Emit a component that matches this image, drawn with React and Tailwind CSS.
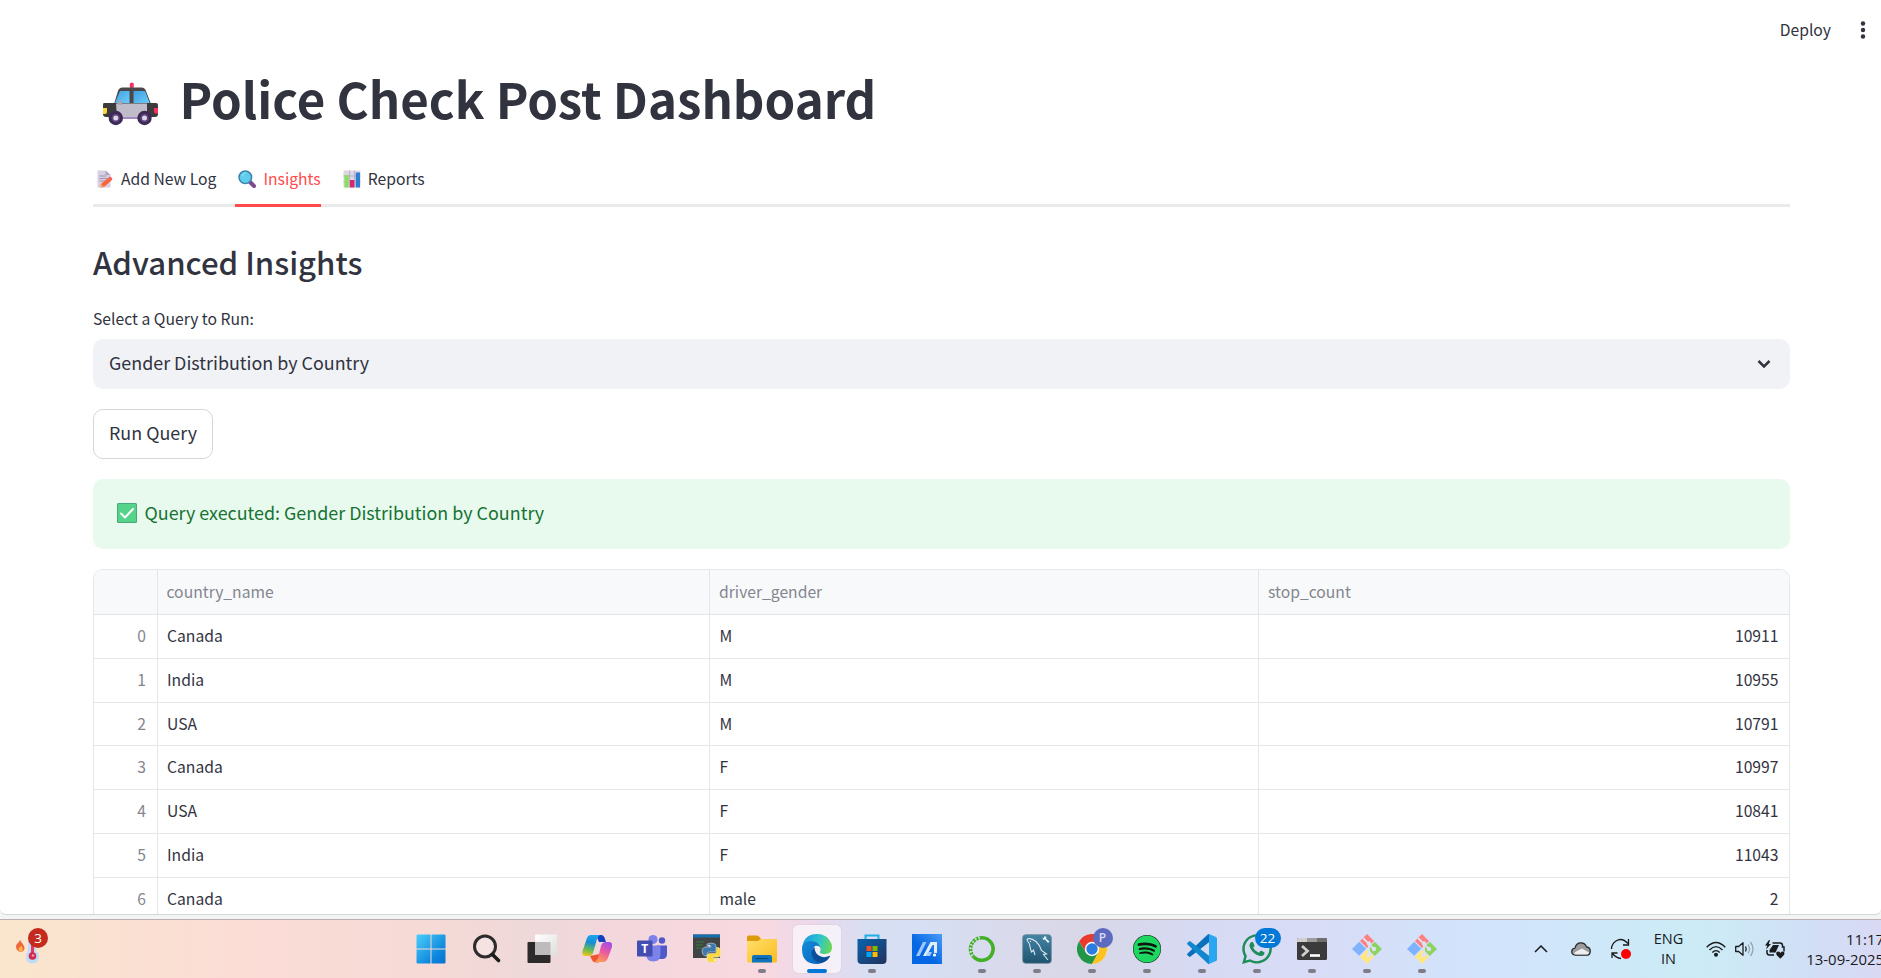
import React from "react";
import { FaSpotify, FaWhatsapp } from "react-icons/fa";

const rows = [
  ["Canada", "M", "10911"],
  ["India", "M", "10955"],
  ["USA", "M", "10791"],
  ["Canada", "F", "10997"],
  ["USA", "F", "10841"],
  ["India", "F", "11043"],
  ["Canada", "male", "2"],
];

function PoliceCar() {
  return (
    <svg className="h-[44px] w-[56px]" viewBox="0 0 56 44">
      <defs>
        <linearGradient id="glass" x1="0" y1="0" x2="1" y2="1">
          <stop offset="0" stopColor="#3f9fe0" />
          <stop offset="1" stopColor="#6ccffc" />
        </linearGradient>
      </defs>
      <rect x="27.800" y="0.500" width="4" height="6" rx="2" fill="#f92f60" />
      <path d="M16 9q1-3.500 4.500-3.500h19q3.500 0 4.500 3.500l5 13H12z" fill="#4a4649" />
      <path d="M18 9h9.500v13H12.500z" fill="url(#glass)" />
      <path d="M31.500 9H42q1 0 1.500 1l4.500 12H31.500z" fill="url(#glass)" />
      <path d="M2 21h52q2 0 2 2v9q0 3-3 3H4q-3 0-3-3V23q0-2 1-2z" fill="#3c3a3d" />
      <path d="M14 21.500h31v14H15z" fill="#c1bcca" />
      <path d="M18 35h22v2H18z" fill="#a48bbf" />
      <path d="M1 26h4v4q0 2-2 2H1z" fill="#fcd53f" />
      <path d="M52 26H56v5.500h-2q-2 0-2-2z" fill="#f92f60" />
      <path d="M15.500 22.500q0-4.500 4.500-4.500v5z" fill="#aaa5b2" />
      <circle cx="13.800" cy="36" r="7.200" fill="#3d2857" />
      <circle cx="13.800" cy="36" r="4.300" fill="#5b4577" />
      <circle cx="13.800" cy="36" r="2.500" fill="#ddd5e6" />
      <circle cx="42.500" cy="36" r="7.200" fill="#3d2857" />
      <circle cx="42.500" cy="36" r="4.300" fill="#5b4577" />
      <circle cx="42.500" cy="36" r="2.500" fill="#ddd5e6" />
    </svg>
  );
}

function MemoIcon() {
  return (
    <svg className="h-[18px] w-[18px]" viewBox="0 0 18 18">
      <path d="M1.500 0.500h8L14.500 5v12.500h-13z" fill="#d8d0e2" />
      <path d="M9.500 0.500L14.500 5h-5z" fill="#b0a4c0" />
      <path d="M3.500 6h7M3.500 8.500h8M3.500 11h6" stroke="#a094ae" strokeWidth="1" />
      <path d="M5 14l7.500-6.500 3 3L8 17l-3.500.5z" fill="#f9663a" />
      <path d="M12.500 7.500l1.500-1q1 0 2.500 2.500l-1 1.500z" fill="#f0565c" />
      <path d="M5 14l3 3-3.500.5z" fill="#f3ad61" />
    </svg>
  );
}

function LensIcon() {
  return (
    <svg className="h-[18px] w-[18px]" viewBox="0 0 18 18">
      <path d="M11 11l5 5" stroke="#7d4b8d" strokeWidth="4" strokeLinecap="round" />
      <circle cx="7.300" cy="7.300" r="6.300" fill="#5fcdee" stroke="#3f83ad" strokeWidth="1.500" />
      <path d="M4 6q1-3 4-3" stroke="#83ddf5" strokeWidth="1.200" fill="none" />
    </svg>
  );
}

function ChartIcon() {
  return (
    <svg className="h-[18px] w-[18px]" viewBox="0 0 18 18">
      <rect x="0.500" y="0.500" width="17" height="17" rx="1" fill="#ddd6e5" />
      <path d="M6.500.5v17M11.500.5v17M.5 6h17M.5 12h17" stroke="#b4a9c0" strokeWidth="0.800" />
      <rect x="1.500" y="5" width="4.300" height="12.500" fill="#8ade62" />
      <rect x="7" y="10" width="4.300" height="7.500" fill="#d9256d" />
      <rect x="12.700" y="2.500" width="4.300" height="15" fill="#2c7fd2" />
    </svg>
  );
}

function CheckIcon() {
  return (
    <svg className="h-[20px] w-[20px]" viewBox="0 0 20 20">
      <rect x="0" y="0" width="20" height="20" rx="1.500" fill="#47a878" />
      <rect x="1" y="1" width="18" height="18" rx="1" fill="#55d38b" />
      <path d="M4 10.500l4 4 8-8.500" stroke="#fff" strokeWidth="1.900" fill="none" strokeLinecap="round" strokeLinejoin="round" />
    </svg>
  );
}

function WindowsIcon() {
  return (
    <svg viewBox="0 0 30 30" className="h-[30px] w-[30px]">
      <defs>
        <linearGradient id="win" x1="0" y1="0" x2="30" y2="30" gradientUnits="userSpaceOnUse">
          <stop offset="0" stopColor="#4dd0fb" />
          <stop offset="0.700" stopColor="#0d86dc" />
          <stop offset="1" stopColor="#0672cf" />
        </linearGradient>
      </defs>
      <path fill="url(#win)" d="M1.500.5h13v14h-14v-13q0-1 1-1zM15.500.5h13q1 0 1 1v13h-14zM.5 15.500h14v14h-13q-1 0-1-1zM15.500 15.500h14v13q0 1-1 1h-13z" />
    </svg>
  );
}

function SearchIcon() {
  return (
    <svg viewBox="0 0 30 30" className="h-[30px] w-[30px]">
      <circle cx="13" cy="12.500" r="10.500" fill="#fff" fillOpacity="0.250" stroke="#2d2b2c" strokeWidth="3" />
      <path d="M20.500 20.500l6 6" stroke="#1c1b1c" strokeWidth="3.600" strokeLinecap="round" />
    </svg>
  );
}

function TaskViewIcon() {
  return (
    <svg viewBox="0 0 30 30" className="h-[30px] w-[30px]">
      <defs>
        <linearGradient id="tv" x1="0" y1="0" x2="1" y2="1">
          <stop offset="0" stopColor="#fff" />
          <stop offset="1" stopColor="#dedede" />
        </linearGradient>
      </defs>
      <rect x="0.500" y="8" width="23" height="21" rx="1" fill="#2c2a2b" />
      <rect x="8" y="0.500" width="22" height="20.500" rx="1" fill="url(#tv)" />
      <path d="M8 8h15.500v13H9q-1 0-1-1z" fill="#bdbbbb" />
    </svg>
  );
}

function CopilotIcon() {
  return (
    <svg viewBox="0 0 30 30" className="h-[30px] w-[30px]">
      <defs>
        <linearGradient id="cpA" x1="0.500" y1="0" x2="0.300" y2="1">
          <stop offset="0" stopColor="#1ba5ea" />
          <stop offset="0.350" stopColor="#168ed6" />
          <stop offset="0.700" stopColor="#68b954" />
          <stop offset="1" stopColor="#f0c419" />
        </linearGradient>
        <linearGradient id="cpB" x1="0.700" y1="0" x2="0.300" y2="1">
          <stop offset="0" stopColor="#a34fe6" />
          <stop offset="0.450" stopColor="#e958a3" />
          <stop offset="1" stopColor="#fd9d52" />
        </linearGradient>
      </defs>
      <path d="M14 1h5q3 0 4 4l1 3h-7z" fill="#1440bd" />
      <path d="M8 22l2 4q1 2.500 4 2.500h3l3-9z" fill="#f1552f" />
      <path d="M9 1h9q-2 1-3 4l-4 14q-1 3-4 3H3.500q-4 0-3-5L5 4q1-3 4-3z" fill="url(#cpA)" />
      <path d="M21 28h-9q3-1 4-4l3-12q1-4 5-4h3q4 0 3 5l-4.500 12q-1.500 3-4.500 3z" fill="url(#cpB)" />
    </svg>
  );
}

function TeamsIcon() {
  return (
    <svg viewBox="0 0 30 30" className="h-[30px] w-[30px]">
      <circle cx="16" cy="5.500" r="4.600" fill="#7b83eb" />
      <circle cx="25" cy="6.500" r="3.200" fill="#5059c9" />
      <path d="M20 11.500h10v8.500q0 5-5 5h-4z" fill="#5059c9" />
      <path d="M9 11.500h14.500V20q0 7.500-7.200 7.500T9 20z" fill="#7b83eb" />
      <rect x="0" y="6.500" width="15.500" height="16" rx="1" fill="#444db0" />
      <text x="7.700" y="19" textAnchor="middle" fontSize="12" fontWeight="700" fill="#fff" fontFamily="Open Sans">T</text>
    </svg>
  );
}

function PythonIcon() {
  return (
    <svg viewBox="0 0 30 30" className="h-[30px] w-[30px]">
      <rect x="1" y="0.500" width="27" height="23.500" fill="#424546" />
      <rect x="1" y="0.500" width="27" height="3" fill="#1670b0" />
      <path d="M4 8h8M4 11h7M4 14h6" stroke="#37783c" strokeWidth="1.200" />
      <g stroke="#eee" strokeWidth="0.500">
        <path d="M15 10q4-2 8 0 1 1 1 3v3q0 2-2 2h-5q-2 0-2 2v2h-2q-3-1-3-5 0-3 3-4h6v-1h-4z" fill="#3c78ab" />
        <path d="M24.500 13.500h2q2.500 1 2.500 5t-2.500 4.500H21v1h4v2q0 2.500-5 2.500t-5-2.500V22q0-2.500 2.500-2.500h4.500q2.500 0 2.500-2.500z" fill="#fbd83e" />
      </g>
      <circle cx="17.200" cy="11.700" r="0.900" fill="#fff" />
      <circle cx="22.700" cy="26.200" r="0.900" fill="#fff" />
    </svg>
  );
}

function FolderIcon() {
  return (
    <svg viewBox="0 0 30 30" className="h-[30px] w-[30px]">
      <defs>
        <linearGradient id="fold" x1="0" y1="0" x2="1" y2="1">
          <stop offset="0" stopColor="#ffdf6b" />
          <stop offset="1" stopColor="#fbbc20" />
        </linearGradient>
      </defs>
      <path d="M0 3q0-1.500 1.500-1.500H10q1 0 2 1L14 5h14.500q1.500 0 1.500 1v5H0z" fill="#dd9a0a" />
      <path d="M0 7h10q1.500 0 2.500-1t2.500-1h15v22q0 1.500-1.500 1.500h-27Q0 28.500 0 27z" fill="url(#fold)" />
      <path d="M5 28.500V23q0-2 2-2h16q2 0 2 2v5.500z" fill="#0e74bd" />
      <path d="M8.500 24.500h13" stroke="#084a7c" strokeWidth="1.200" />
    </svg>
  );
}

function EdgeIcon() {
  return (
    <svg viewBox="0 0 30 30" className="h-[30px] w-[30px]">
      <defs>
        <linearGradient id="edA" x1="0" y1="0.300" x2="1" y2="0.500">
          <stop offset="0" stopColor="#1c9be0" />
          <stop offset="0.550" stopColor="#2ec3cf" />
          <stop offset="1" stopColor="#68d957" />
        </linearGradient>
        <linearGradient id="edB" x1="0" y1="0" x2="0.800" y2="1">
          <stop offset="0" stopColor="#118bd9" />
          <stop offset="1" stopColor="#0d68bd" />
        </linearGradient>
      </defs>
      <path d="M0.500 12Q2.500 0 15 0q8 0 12 5.500 3 4 3 8 0 6.500-7 6.500-5 0-5.500-2 2-2 .5-4.500Q16.500 11 12 10 4 8.500.5 12z" fill="url(#edA)" />
      <path d="M0 15Q0 7 9 7q7 0 9 6-4-2.500-6 0-4.500 6 1 11.500 3 3 7 4.500-3 1-5 1Q0 30 0 15z" fill="url(#edB)" />
      <path d="M12.500 13Q8.500 16 10 21.500 12.500 29 20 29q5-1.500 8-6.500.3-1-1-.5-4 2-8 .5Q12.500 20.500 12.500 13z" fill="#0b4f9b" />
      <path d="M13.500 12.800q1.500-1.500 3.500 0 2 2 .5 4.500-.8 1 .5 2-3-.5-4.500-3-1-2 0-3.500z" fill="#f7eef3" />
    </svg>
  );
}

function StoreIcon() {
  return (
    <svg viewBox="0 0 30 30" className="h-[30px] w-[30px]">
      <defs>
        <linearGradient id="store" x1="0" y1="0" x2="1" y2="1">
          <stop offset="0" stopColor="#0864ae" />
          <stop offset="1" stopColor="#23315b" />
        </linearGradient>
      </defs>
      <path d="M8.500 6V1.500h13V6" fill="none" stroke="#22aee6" strokeWidth="2" />
      <path d="M0.500 5h29v21q0 4-4 4h-21q-4 0-4-4z" fill="url(#store)" />
      <path d="M9.500 12h5v5h-5z" fill="#f25022" />
      <path d="M15.500 12h5v5h-5z" fill="#7fba00" />
      <path d="M9.500 18h5v5h-5z" fill="#00a4ef" />
      <path d="M15.500 18h5v5h-5z" fill="#ffb900" />
    </svg>
  );
}

function AsusIcon() {
  return (
    <svg viewBox="0 0 30 30" className="h-[30px] w-[30px]">
      <defs>
        <linearGradient id="asus" x1="0.400" y1="0.600" x2="1" y2="0">
          <stop offset="0" stopColor="#0567e3" />
          <stop offset="1" stopColor="#4b9af8" />
        </linearGradient>
      </defs>
      <rect width="30" height="30" fill="url(#asus)" />
      <path d="M4 22L11 8h3.500L7.500 22z" fill="#9cc8fa" />
      <path d="M11 22L18.500 8H25v11h-3v-8h-1.500L14.500 22z" fill="#e1effd" />
      <path d="M16 18h4l-2 4h-4z" fill="#a5cdfb" />
      <circle cx="22.500" cy="21" r="1.600" fill="#fff" />
    </svg>
  );
}

function AnacondaIcon() {
  return (
    <svg viewBox="0 0 30 30" className="h-[30px] w-[30px]">
      <path d="M15 3.700a11.300 11.300 0 1 1-8 19.500" fill="none" stroke="#43b02a" strokeWidth="3.600" />
      <path d="M15 3.700a11.300 11.300 0 0 0-8 19.500" fill="none" stroke="#43b02a" strokeWidth="3.600" strokeDasharray="2.600 0.900" />
      <path d="M13 3.300a12.500 12.500 0 0 0-7.500 19" fill="none" stroke="#e0e6ea" strokeWidth="0.900" strokeDasharray="2 1.600" />
    </svg>
  );
}

function MysqlIcon() {
  return (
    <svg viewBox="0 0 30 30" className="h-[30px] w-[30px]">
      <defs>
        <linearGradient id="mys" x1="0" y1="0" x2="0" y2="1">
          <stop offset="0" stopColor="#4585a6" />
          <stop offset="1" stopColor="#1e536f" />
        </linearGradient>
      </defs>
      <rect x="0.700" y="0.700" width="28.600" height="28.600" rx="3" fill="url(#mys)" stroke="#6c8796" strokeWidth="0.800" />
      <path d="M5 5q4-1.500 9 2.500 4 3.500 5.500 9l5 3.500-3 .5 4.500 5.500M5 5q0 2 2.500 5 .5 4 2 8l2-2 1.500 5" fill="none" stroke="#dbe6ec" strokeWidth="1.100" />
      <circle cx="8.500" cy="7.500" r="0.600" fill="#fff" />
      <path d="M20.500 3.500l1 2.500 1.500-.5 3 3.500 1.500-1.500-3.500-3 .5-1.500-2-1-.5 2z" fill="#eef4f8" />
    </svg>
  );
}

function ChromeIcon() {
  return (
    <div className="relative">
      <svg viewBox="0 0 30 30" className="h-[30px] w-[30px]">
        <circle cx="15" cy="15" r="15" fill="#fff" />
        <path d="M15 8h13.300A15 15 0 0 0 2 7.500L9 18.500z" fill="#e93a30" />
        <path d="M9 18.500L2 7.500A15 15 0 0 0 15 30l6.500-11.500z" fill="#219548" />
        <path d="M15 8h13.300A15 15 0 0 1 15 30l6.200-11.500z" fill="#fcc31e" />
        <circle cx="15" cy="15" r="7.200" fill="#fff" />
        <circle cx="15" cy="15" r="5.700" fill="#2a7de1" />
      </svg>
      <span className="absolute -top-[6px] left-[16px] flex h-[20px] w-[20px] items-center justify-center rounded-full bg-[#5c6bc0] text-[12px] font-semibold text-[#d9dcf2]">P</span>
    </div>
  );
}

function SpotifyIcon() {
  return (
    <div className="flex h-[30px] w-[30px] items-center justify-center">
      <div className="rounded-full bg-[#10150f] bg-clip-content p-[1px]">
        <FaSpotify className="block h-[28px] w-[28px] text-[#1ed760]" />
      </div>
    </div>
  );
}

function VscodeIcon() {
  return (
    <svg viewBox="0 0 30 30" className="h-[30px] w-[30px]">
      <path d="M22 0l7 3q1 .5 1 1.500v21q0 1-1 1.500l-7 3z" fill="#2aa7f0" />
      <path d="M0.500 19.500q-.8 1 0 1.700l1.500 1.400q.8.600 1.600 0L22 8.300V0q-.8 0-1.300.6z" fill="#0b70bb" />
      <path d="M0.500 10.500q-.8-1 0-1.700L2 7.400q.8-.6 1.600 0L22 21.700V30q-.8 0-1.300-.6z" fill="#1187cd" />
    </svg>
  );
}

function WhatsappIcon() {
  return (
    <div className="relative">
      <FaWhatsapp className="h-[34px] w-[34px] text-[#1f8d57]" />
      <span className="absolute -top-[4px] left-[15px] flex h-[20px] w-[26px] items-center justify-center rounded-full bg-[#0078d7] text-[13.500px] text-white">22</span>
    </div>
  );
}

function TerminalIcon() {
  return (
    <svg viewBox="0 0 30 30" className="h-[30px] w-[30px]">
      <rect x="0" y="4" width="30" height="22" rx="1.500" fill="#3b3b3b" />
      <path d="M0 8V5.500Q0 4 1.500 4H10v4z" fill="#cfcfcf" />
      <path d="M10 4h10v4H10z" fill="#9c9c9c" />
      <path d="M20 4h8.500Q30 4 30 5.500V8H20z" fill="#6f6f6f" />
      <path d="M5 12l5.500 5L5 22" stroke="#cfcfcf" strokeWidth="2.800" fill="none" />
      <path d="M13 21.500h10" stroke="#fff" strokeWidth="2.600" />
    </svg>
  );
}

function GitIcon() {
  return (
    <svg viewBox="0 0 30 30" className="h-[30px] w-[30px]">
      <path d="M15 0l7 7-7 7-7-7z" fill="#ff8080" />
      <path d="M7.200 7.800l7 7-7 7L0 15z" fill="#80b3ff" />
      <path d="M22.800 7.800L30 15l-7.200 7-7-7z" fill="#8dd35f" />
      <path d="M15 15.700l7 7L15 30l-7-7.300z" fill="#ffe680" />
      <path d="M11 4l6 6v12M17 10.500l5 4.500" stroke="#dce1f5" strokeWidth="1.800" fill="none" />
      <circle cx="17" cy="9.500" r="2.200" fill="#dce1f5" />
      <circle cx="22" cy="15" r="2.200" fill="#dce1f5" />
      <circle cx="17" cy="21" r="2.200" fill="#dce1f5" />
    </svg>
  );
}

const apps = [
  [WindowsIcon, false],
  [SearchIcon, false],
  [TaskViewIcon, false],
  [CopilotIcon, false],
  [TeamsIcon, false],
  [PythonIcon, false],
  [FolderIcon, true],
  [EdgeIcon, "active"],
  [StoreIcon, true],
  [AsusIcon, false],
  [AnacondaIcon, true],
  [MysqlIcon, true],
  [ChromeIcon, true],
  [SpotifyIcon, true],
  [VscodeIcon, true],
  [WhatsappIcon, true],
  [TerminalIcon, true],
  [GitIcon, true],
  [GitIcon, true],
];

function AppButton({ Icon, state }) {
  return (
    <div className="relative flex h-[58px] w-[55px] shrink-0 items-center justify-center first:mr-[1px]">
      <div className={"flex h-[48px] w-[48px] items-center justify-center rounded-[5px] " + (state === "active" ? "bg-white/60 shadow-[0_0_1px_rgba(0,0,0,0.25)]" : "")}>
        <Icon />
      </div>
      {state === true && <span className="absolute bottom-[5px] h-[4px] w-[8px] rounded-full bg-[#7f7e88]" />}
      {state === "active" && <span className="absolute bottom-[5px] h-[4px] w-[20px] rounded-full bg-[#0078d7]" />}
    </div>
  );
}

function WeatherWidget() {
  return (
    <div className="relative h-[58px] w-[403px] shrink-0">
      <svg className="absolute left-[14px] top-[8px] h-[36px] w-[36px]" viewBox="0 0 36 36">
        <path d="M6 24q-4-1.500-4-5.500 0-2.500 2.500-4 .5-1.500 2-2.500 0 1.500 2 3.500 3 4 1.500 6.500Q9 24 6 24z" fill="#f2663f" />
        <path d="M6 23.500q-2-1-1-4 2-.5 2.500-2 2 4 .5 6z" fill="#fdb847" />
        <path d="M14 8q0-3 4-3t4 3v15q3 2 3 6 0 6-7 6.500-6-.5-6-6.500 0-4 2-6z" fill="#bfdcf8" />
        <path d="M18.500 12v16" stroke="#e5365c" strokeWidth="3" />
        <circle cx="18.500" cy="28" r="3.800" fill="#cf2951" />
        <circle cx="19" cy="27.500" r="1.300" fill="#f0a0a8" />
      </svg>
      <span className="absolute left-[28px] top-[8px] flex h-[20px] w-[20px] items-center justify-center rounded-full bg-[#c42b1c] text-[13.500px] text-white">3</span>
    </div>
  );
}

function Tray() {
  return (
    <div className="flex h-[58px] shrink-0 items-center text-[#191b1f]">
      <div className="flex w-[40px] justify-center">
        <svg viewBox="0 0 14 8" className="h-[8px] w-[14px]"><path d="M1 7l6-6 6 6" fill="none" stroke="currentColor" strokeWidth="1.500" /></svg>
      </div>
      <div className="flex w-[40px] justify-center">
        <svg viewBox="0 0 20 14" className="h-[14px] w-[20px]">
          <path d="M4.500 13.200Q.7 12.800.7 9.500.8 6.500 4 6 5 .8 10 .8q4 0 5.500 4Q19.300 5.500 19.300 9q0 4-3.300 4.200z" fill="#9b9b9b" stroke="#262626" strokeWidth="1.200" />
          <path d="M3 12q0-1.500 3-3l5-2.500 7 4q-.5 2-2 2H4.500z" fill="#eeeeee" />
        </svg>
      </div>
      <div className="flex w-[40px] justify-center">
        <svg viewBox="0 0 22 22" className="h-[22px] w-[22px]">
          <path d="M1.500 11Q1.500 6 6 3q6-4 12 2.500M18.500 1v6H13M2 20v-5h5.500M2 15q4 5 9 5.500" fill="none" stroke="currentColor" strokeWidth="1.300" />
          <circle cx="16" cy="16" r="5" fill="#ff0000" />
        </svg>
      </div>
      <div className="flex w-[55px] flex-col items-center text-[14.500px] leading-[20px]">
        <span>ENG</span>
        <span>IN</span>
      </div>
      <div className="flex w-[40px] justify-center">
        <svg viewBox="0 0 20 16" className="h-[16px] w-[20px]" fill="none" stroke="currentColor" strokeWidth="1.400">
          <path d="M0.700 6.300q9.300-9.600 18.600 0M3.500 9q6.500-6.800 13 0M6.300 11.500q3.700-3.800 7.400 0" />
          <circle cx="10" cy="13.700" r="1.300" fill="currentColor" />
        </svg>
      </div>
      <div className="flex w-[18px] justify-center">
        <svg viewBox="0 0 20 16" className="h-[16px] w-[20px] shrink-0" fill="none" stroke="currentColor" strokeWidth="1.300">
          <path d="M0.700 5.500h3L8 1.700v12.600L3.700 10.500h-3z" strokeLinejoin="round" />
          <path d="M10.500 5.500q1.500 2.500 0 5" />
          <path d="M13 3.500q3 4.500 0 9M15.500 1q5 7 0 14" stroke="#98a5b0" />
        </svg>
      </div>
      <div className="flex w-[42px] justify-center">
        <svg viewBox="0 0 20 19" className="h-[19px] w-[20px]">
          <path d="M7.500 3H15q2.500 0 2.500 2.500V7H19v4.500M9 15H4.500Q2 15 2 12.500V10" fill="none" stroke="currentColor" strokeWidth="1.500" />
          <path d="M8 5h6l-3.500 7.500H4.500V10z" fill="currentColor" />
          <path d="M4 0L0 5.500h2.300L1 9.500 6 4H3.800L5 0z" fill="currentColor" />
          <path d="M15.300 18.700l-3.700-3.800q-1.200-3 1.300-3.300 1.600 0 2.400 1.300 1-1.300 2.500-1.300 2.500.3 1.200 3.300z" fill="currentColor" />
        </svg>
      </div>
      <div className="flex w-[88px] shrink-0 flex-col items-end text-[14.900px] leading-[20px]">
        <span>11:17</span>
        <span>13-09-2025</span>
      </div>
    </div>
  );
}

function Tab({ icon, label, active }) {
  return (
    <div className={"flex h-full items-center border-b-[3px] pl-[3px] " + (active ? "border-[#ff4b4b] text-[#ff4b4b]" : "border-transparent")}>
      <span className="mr-[7px] flex">{icon}</span>
      <span>{label}</span>
    </div>
  );
}

export default function App() {
  return (
    <div className="flex h-[978px] w-[1881px] flex-col overflow-hidden bg-[#f3f4f4]">
      <div className="h-[915px] shrink-0 overflow-hidden rounded-b-[6px] border-b border-[#d6d6d6] bg-white font-['Noto_Sans_CJK_SC',sans-serif] text-[#31333f]">
        <div className="flex h-[60px] items-center justify-end text-[15.700px]">
          <span className="mr-[29px]">Deploy</span>
          <svg viewBox="0 0 6 18" className="mr-[15px] h-[18px] w-[6px]" fill="currentColor">
            <circle cx="3" cy="2.500" r="2.200" />
            <circle cx="3" cy="9" r="2.200" />
            <circle cx="3" cy="15.500" r="2.200" />
          </svg>
        </div>
        <div className="ml-[93px] w-[1697px]">
          <h1 className="flex h-[76px] items-center text-[49.200px] font-bold leading-none">
            <span className="ml-[9px] mr-[21.500px] mt-[12px] flex"><PoliceCar /></span>
            <span className="whitespace-nowrap">Police Check Post Dashboard</span>
          </h1>
          <div className="relative mt-[18px] h-[53px]">
            <div className="absolute inset-x-0 bottom-0 h-[3px] bg-[#eaeaeb]" />
            <div className="relative flex h-full gap-[19px] text-[15.700px]">
              <Tab icon={<MemoIcon />} label="Add New Log" />
              <Tab icon={<LensIcon />} label="Insights" active />
              <Tab icon={<ChartIcon />} label="Reports" />
            </div>
          </div>
          <h2 className="mt-[30px] h-[49px] text-[31.150px] font-medium leading-[49px]">Advanced Insights</h2>
          <div className="mt-[21px] h-[24px] text-[15.700px] leading-[24px]">Select a Query to Run:</div>
          <div className="mt-[8px] flex h-[50px] items-center justify-between rounded-[10px] bg-[#f0f2f6] pl-[16px] pr-[18px] text-[17.900px]">
            <span className="pb-[4px]">Gender Distribution by Country</span>
            <svg viewBox="0 0 16 10" className="h-[10px] w-[16px]"><path d="M2.500 2L8 7.500 13.500 2" fill="none" stroke="#31333f" strokeWidth="2.500" /></svg>
          </div>
          <button className="mt-[20px] flex h-[50px] w-[120px] items-center justify-center rounded-[10px] border border-[#d6d6d9] bg-white pb-[4px] text-[17.900px]">Run Query</button>
          <div className="mt-[20px] flex h-[70px] items-center rounded-[10px] bg-[#e8f9ee] pl-[24px] text-[17.900px] text-[#177233]">
            <span className="mb-[2px] mr-[7.500px] flex"><CheckIcon /></span>
            <span className="pb-[4px]">Query executed: Gender Distribution by Country</span>
          </div>
          <div className="mt-[20px] rounded-t-[10px] border border-[#e6e7ea] text-[15.700px]">
            <div className="grid h-[45px] grid-cols-[64px_552px_549px_1fr] rounded-t-[9px] border-b border-[#e4e4ea] bg-[#f8f9fb] leading-[44px] text-[#84868e]">
              <div className="border-r border-[#e4e4ea]" />
              <div className="border-r border-[#e4e4ea] pl-[8.500px]">country_name</div>
              <div className="border-r border-[#e4e4ea] pl-[9px]">driver_gender</div>
              <div className="pl-[9px]">stop_count</div>
            </div>
            {rows.map((r, i) => (
              <div key={i} className="grid h-[43.750px] grid-cols-[64px_552px_549px_1fr] border-b border-[#e8e8ec] leading-[41px]">
                <div className="border-r border-[#e6e6ea] pr-[11px] text-right text-[#84868e]">{i}</div>
                <div className="border-r border-[#e6e6ea] pl-[9px]">{r[0]}</div>
                <div className="border-r border-[#e6e6ea] pl-[9.500px]">{r[1]}</div>
                <div className="pr-[10.500px] text-right">{r[2]}</div>
              </div>
            ))}
          </div>
        </div>
      </div>
      <div className="mt-[4px] flex h-[59px] shrink-0 items-center border-t border-[#b9afb4] bg-[linear-gradient(90deg,#fae6cc_0px,#fae0d2_130px,#fbdcd6_270px,#f6dad6_420px,#eed8d9_540px,#f5d7de_650px,#f9d9e0_760px,#e9d9ec_820px,#d8dff3_870px,#d6dff4_920px,#d9daeb_1010px,#d8d7e8_1090px,#d6daf3_1200px,#d9dcf6_1310px,#d2e2fa_1440px,#d1e5fb_1540px,#cbebf6_1680px,#cdeaf5_1720px,#d0e0f6_1800px,#d9d9f4_1881px)] font-['Open_Sans','Noto_Sans',sans-serif]">
        <WeatherWidget />
        <div className="flex shrink-0">
          {apps.map(([Icon, state], i) => (
            <AppButton key={i} Icon={Icon} state={state} />
          ))}
        </div>
        <div className="-mr-[3px] ml-auto"><Tray /></div>
      </div>
    </div>
  );
}
